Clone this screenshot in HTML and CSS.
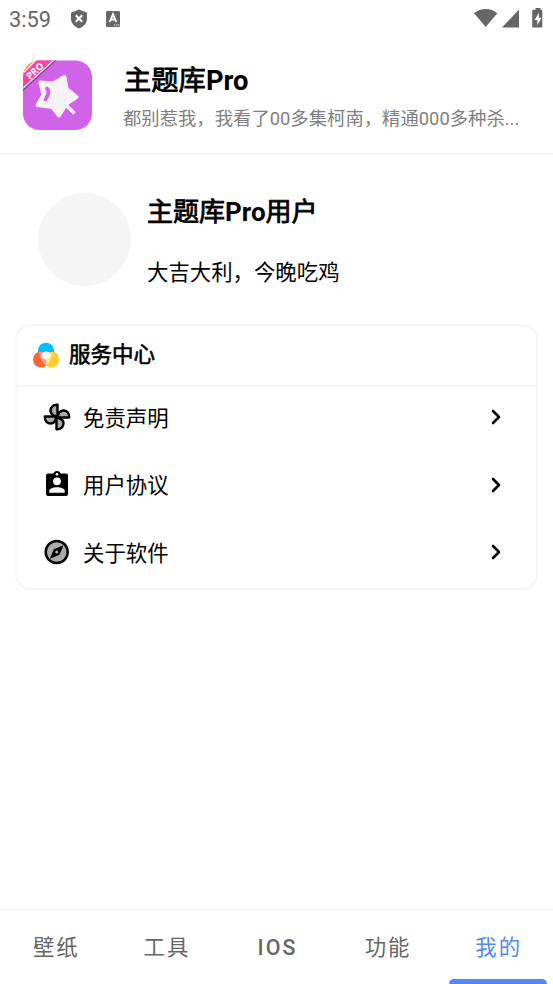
FILE: index.html
```html
<!DOCTYPE html>
<html lang="zh-CN">
<head>
<meta charset="utf-8">
<title>主题库Pro</title>
<link rel="stylesheet" href="styles.css">
</head>
<body>
<div class="status">
  <span class="time">3:59</span>
  <svg class="shield" width="18" height="20" viewBox="0 0 18 20"><path fill="#666" d="M9 .5 17 3.700V9.500c0 4.500-3.200 8.200-8 10-4.800-1.800-8-5.500-8-10V3.700Z"/><path d="m5.800 6.300 6.400 6.400m0-6.400-6.400 6.400" stroke="#fff" stroke-width="2"/></svg>
  <svg class="abox" width="14" height="16" viewBox="0 0 14 16"><rect width="14" height="16" rx="1.300" fill="#666"/><path d="M3.700 11 7 3.200 10.300 11M4.900 8.500h4.200" fill="none" stroke="#fff" stroke-width="1.900"/><path d="M8 14h1.200M10 14h1.200M12 14h1.200" stroke="#fff" stroke-width="1.200"/></svg>
  <svg class="signals" width="72" height="22" viewBox="0 0 72 22"><g fill="#666"><path d="M0 5.300C6.500-.4 17-.4 23.300 5.300L11.700 19Z"/><path d="M45 1.500V19.500H28Z"/><path d="M59.500 1.800h2V0h5v1.800h1q.8 0 .8.800v16q0 .9-.9.900h-8.300q-.9 0-.9-.9v-16q0-.8.8-.8Z"/></g><path fill="#fff" d="M65 4.800 60.500 12h2.800v5l4.200-7.300h-2.700Z"/></svg>
</div>
<header class="header">
  <svg class="logo" width="70" height="70" viewBox="0 0 70 70">
    <defs><clipPath id="logo-shape"><rect y=".5" width="69" height="69.500" rx="16.500"/></clipPath></defs>
    <g clip-path="url(#logo-shape)"><rect width="70" height="70" fill="#d163e9"/>
    <path d="M0 0H34L0 31Z" fill="#8d3b8e"/><path d="M0 0H32L0 29Z" fill="#fff"/><path d="M0 0H30L0 27.500Z" fill="#ff42a8"/><path d="M0 0H14L0 14Z" fill="#fff"/><path d="M0 0H12.500L0 12.500Z" fill="#f6a44d"/></g>
    <path d="M41.500 17 43.700 29 53.500 37 43.500 43.500 36 55.500 29.500 47 14.500 45 20.500 35 17.500 22.500 30 23.500Z" fill="#f5f3f7" stroke="#f5f3f7" stroke-width="4" stroke-linejoin="round"/>
    <path d="m41 43 10.500 10.500" stroke="#f5f3f7" stroke-width="3.300"/>
    <path d="M24 28.500q2.500 2.500 1 6t-2.500 5" fill="none" stroke="#d163e9" stroke-width="3.800" stroke-linecap="round"/>
    <text class="ribbon" x="7" y="20" transform="rotate(-43 7 20)">PRO</text>
  </svg>
  <div class="heading"><h1>主题库<b>Pro</b></h1><p>都别惹我，我看了00多集柯南，精通000多种杀...</p></div>
</header>
<main>
  <section class="profile"><div class="avatar"></div><div class="user"><h2>主题库<b>Pro</b>用户</h2><p>大吉大利，今晚吃鸡</p></div></section>
  <section class="card">
    <div class="card-head">
      <svg width="28" height="28" viewBox="0 0 28 28"><circle cx="9" cy="18.500" r="8" fill="#ff6534"/><circle cx="19.300" cy="18.500" r="8" fill="#ffcb32"/><path d="M6 11C5-1.500 23-1.500 22 11q-4 0-8 4-4-4-8-4Z" fill="#00bfff"/><path d="M7 11q4-.5 7 1.500v12Q7.500 19 7 11Z" fill="#ff9b7b"/><path d="M21 11q-4-.5-7 1.500v12q6.500-5.500 7-13.500Z" fill="#ffdf87"/><circle cx="14" cy="14.500" r="4" fill="#fff"/></svg>
      <h3>服务中心</h3>
    </div>
    <div class="row">
      <svg width="28" height="28" viewBox="0 0 28 28"><g fill="#aaa" stroke="#000" stroke-width="2.400" stroke-linejoin="round"><path id="blade" d="M14.500 13.500V1.800C10 1.500 7.500 4.300 7.500 7.700c0 3 2.500 5 7 5.800Z"/><use href="#blade" transform="rotate(90 14 14)"/><use href="#blade" transform="rotate(180 14 14)"/><use href="#blade" transform="rotate(270 14 14)"/></g></svg>
      <span>免责声明</span><svg class="arrow" width="12" height="16" viewBox="0 0 12 16"><path d="m2 2 6 6-6 6"/></svg>
    </div>
    <div class="row">
      <svg width="28" height="28" viewBox="0 0 28 28"><path d="M5 2.500h5.300a4 4 0 0 1 7.400 0H23q2 0 2 2V23q0 2-2 2H5q-2 0-2-2V4.500q0-2 2-2Z"/><circle cx="14" cy="3.200" r="1.300" fill="#fff"/><circle cx="14" cy="10.300" r="3.900" fill="#fff"/><path d="M6.300 21.700V20c0-5 15.400-5 15.400 0v1.700Z" fill="#fff"/></svg>
      <span>用户协议</span><svg class="arrow" width="12" height="16" viewBox="0 0 12 16"><path d="m2 2 6 6-6 6"/></svg>
    </div>
    <div class="row">
      <svg width="28" height="28" viewBox="0 0 28 28"><circle cx="13.700" cy="14" r="11" fill="#aaa" stroke="#000" stroke-width="2.500"/><path d="m20.500 7.200-4 9.600-9.600 4 4-9.600Z"/><circle cx="13.700" cy="14" r="1.500" fill="#bbb"/></svg>
      <span>关于软件</span><svg class="arrow" width="12" height="16" viewBox="0 0 12 16"><path d="m2 2 6 6-6 6"/></svg>
    </div>
  </section>
</main>
<nav class="tabs"><span>壁纸</span><span>工具</span><span class="latin">IOS</span><span>功能</span><span class="active">我的</span></nav>
</body>
</html>
```
FILE: styles.css
```css
* { box-sizing: border-box; }
body { margin: 0; height: 984px; display: flex; flex-direction: column; overflow: hidden; background: #fff; color: #000; font-family: Roboto, "Noto Sans CJK SC", sans-serif; }
h1, h2, h3, p { margin: 0; font-weight: 400; white-space: nowrap; }
b { font-weight: 700; -webkit-text-stroke: 0; }
svg { display: block; flex: none; }
.status { height: 38px; padding: 0 9px 0 9px; display: flex; align-items: center; color: #666; }
.time { width: 61px; font-size: 21.800px; line-height: 38px; padding-top: 1px; }
.shield { margin-top: -1px; }
.abox { margin-left: 18px; margin-top: -1px; }
.signals { margin-right: -2px; margin-left: auto; }
.header { height: 117px; padding: 22px 0 0 23px; display: flex; border-bottom: 2px solid #f5f5f5; }
.logo { overflow: visible; }
.heading { margin-left: 30px; }
.heading h1 { font-size: 27.300px; line-height: 36px; margin-top: 3px; margin-left: 1px; -webkit-text-stroke: .8px #000; }
.heading p { font-size: 18.350px; line-height: 28px; margin-top: 6px; color: #808080; }
.ribbon { font: 700 9.500px "Open Sans", sans-serif; fill: #fff; }
.profile { height: 169px; padding: 38px 38px 0; display: flex; }
.avatar { width: 93px; height: 93px; border-radius: 50%; background: #f5f5f5; }
.user { margin-left: 16px; }
.user h2 { font-size: 26px; line-height: 36px; margin-top: 1px; -webkit-text-stroke: .8px #000; }
.user p { font-size: 21.400px; line-height: 32px; margin-top: 27px; }
.card { margin: 0 15px; height: 266px; border: 2px solid #f5f5f5; border-radius: 16px; }
.card-head { height: 61px; padding-left: 15px; display: flex; align-items: center; border-bottom: 2px solid #f5f5f5; }
.card-head svg { margin-top: -2px; }
.card-head h3 { margin: -2px 0 0 9px; font-size: 21.500px; line-height: 30px; -webkit-text-stroke: .6px #000; }
.row { height: 67.500px; padding: 0 33px 7px 26px; display: flex; align-items: center; font-size: 21.400px; }
.row span { margin: -2px 0 0 12px; flex: 1; }
.arrow path { fill: none; stroke: #000; stroke-width: 2.600; stroke-linecap: round; stroke-linejoin: round; }
.tabs { margin-top: auto; height: 75px; padding-left: 1px; margin-right: -1px; border-top: 1px solid #f0f0f0; display: grid; grid-template-columns: repeat(5, 1fr); color: #666; font-size: 21.400px; letter-spacing: 2px; line-height: 76px; text-align: center; }
.latin { font-weight: 500; }
.active { color: #5089f5; display: flex; flex-direction: column; align-items: center; }
.active::after { content: ""; flex: none; width: 98px; height: 5px; margin: -7px 2px 0 0; background: #5089f5; border-radius: 5px 5px 0 0; }
```
